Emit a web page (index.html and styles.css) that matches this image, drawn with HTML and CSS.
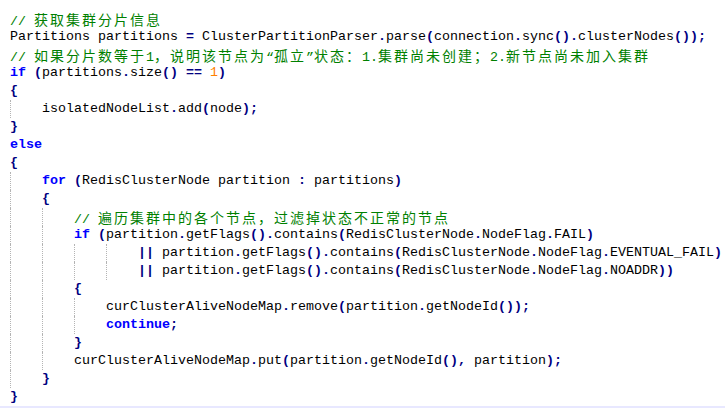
FILE: index.html
```html
<!DOCTYPE html>
<html lang="zh-CN">
<head>
<meta charset="utf-8">
<title>ClusterNodes</title>
<link rel="stylesheet" href="styles.css">
</head>
<body>
<div class="editor">
<div class="ln"><span class="c">// <span class="z">获取集群分片信息</span></span></div>
<div class="ln">Partitions partitions <span class="o">=</span> ClusterPartitionParser<span class="o">.</span>parse<span class="o">(</span>connection<span class="o">.</span>sync<span class="o">().</span>clusterNodes<span class="o">());</span></div>
<div class="ln"><span class="c">// <span class="z">如果分片数等于</span>1<span class="z">，说明该节点为</span>“<span class="z">孤立</span>”<span class="z">状态：</span>1.<span class="z">集群尚未创建；</span>2.<span class="z">新节点尚未加入集群</span></span></div>
<div class="ln"><span class="k">if</span> <span class="o">(</span>partitions<span class="o">.</span>size<span class="o">()</span> <span class="o">==</span> <span class="n">1</span><span class="o">)</span></div>
<div class="ln"><span class="o">{</span></div>
<div class="ln"><span class="ind"></span>isolatedNodeList<span class="o">.</span>add<span class="o">(</span>node<span class="o">);</span></div>
<div class="ln"><span class="o">}</span></div>
<div class="ln"><span class="k">else</span></div>
<div class="ln"><span class="o">{</span></div>
<div class="ln"><span class="ind"></span><span class="k">for</span> <span class="o">(</span>RedisClusterNode partition <span class="o">:</span> partitions<span class="o">)</span></div>
<div class="ln"><span class="ind"></span><span class="o">{</span></div>
<div class="ln"><span class="ind"></span><span class="ind"></span><span class="c">// <span class="z">遍历集群中的各个节点，过滤掉状态不正常的节点</span></span></div>
<div class="ln"><span class="ind"></span><span class="ind"></span><span class="k">if</span> <span class="o">(</span>partition<span class="o">.</span>getFlags<span class="o">().</span>contains<span class="o">(</span>RedisClusterNode<span class="o">.</span>NodeFlag<span class="o">.</span>FAIL<span class="o">)</span></div>
<div class="ln"><span class="ind"></span><span class="ind"></span><span class="ind"></span><span class="ind"></span><span class="o">||</span> partition<span class="o">.</span>getFlags<span class="o">().</span>contains<span class="o">(</span>RedisClusterNode<span class="o">.</span>NodeFlag<span class="o">.</span>EVENTUAL_FAIL<span class="o">)</span></div>
<div class="ln"><span class="ind"></span><span class="ind"></span><span class="ind"></span><span class="ind"></span><span class="o">||</span> partition<span class="o">.</span>getFlags<span class="o">().</span>contains<span class="o">(</span>RedisClusterNode<span class="o">.</span>NodeFlag<span class="o">.</span>NOADDR<span class="o">))</span></div>
<div class="ln"><span class="ind"></span><span class="ind"></span><span class="o">{</span></div>
<div class="ln"><span class="ind"></span><span class="ind"></span><span class="ind"></span>curClusterAliveNodeMap<span class="o">.</span>remove<span class="o">(</span>partition<span class="o">.</span>getNodeId<span class="o">());</span></div>
<div class="ln"><span class="ind"></span><span class="ind"></span><span class="ind"></span><span class="k">continue</span><span class="o">;</span></div>
<div class="ln"><span class="ind"></span><span class="ind"></span><span class="o">}</span></div>
<div class="ln"><span class="ind"></span><span class="ind"></span>curClusterAliveNodeMap<span class="o">.</span>put<span class="o">(</span>partition<span class="o">.</span>getNodeId<span class="o">(),</span> partition<span class="o">);</span></div>
<div class="ln"><span class="ind"></span><span class="o">}</span></div>
<div class="ln"><span class="o">}</span></div>
<div class="ln cur"></div>
</div>
</body>
</html>
```
FILE: styles.css
```css
html, body {
  margin: 0;
  padding: 0;
  background: #ffffff;
  width: 725px;
  height: 408px;
  overflow: hidden;
}

.editor {
  padding-top: 10px;
  font-family: "Liberation Mono", "Courier New", monospace;
  font-size: 13.333px;
  color: #000000;
}

.ln {
  height: 18px;
  line-height: 18px;
  white-space: pre;
  padding-left: 10px;
}

.ln.cur {
  background: #e8e8ff;
}

.ind {
  display: inline-block;
  width: 32px;
  height: 18px;
  box-sizing: border-box;
  border-left: 1px dotted #b4b4b4;
  vertical-align: top;
}

.k {
  color: #0000ff;
  font-weight: bold;
}

.o {
  color: #000080;
  font-weight: bold;
}

.n {
  color: #ff8000;
}

.c {
  color: #008000;
}

.z {
  font-family: "Noto Sans CJK SC", sans-serif;
  font-size: 14px;
  letter-spacing: 2px;
}
```
